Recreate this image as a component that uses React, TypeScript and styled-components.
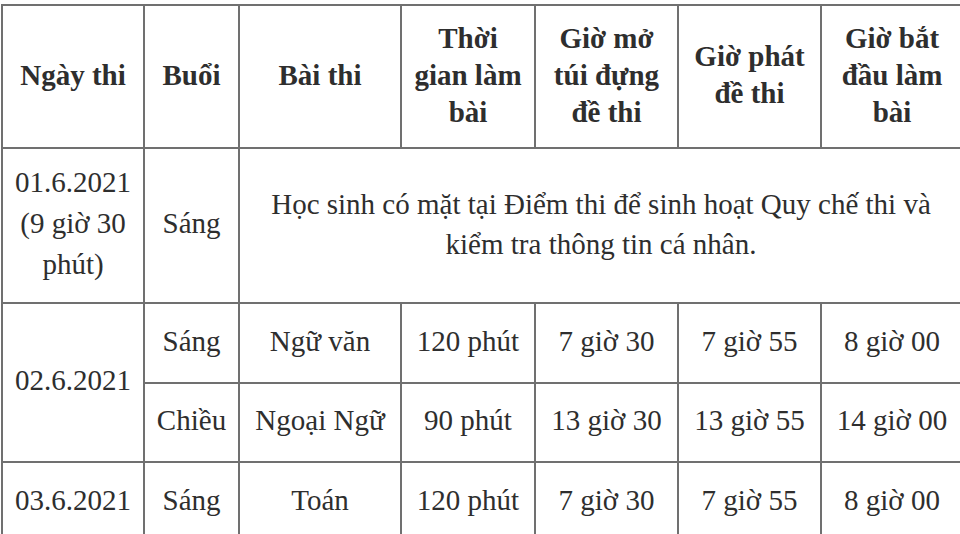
import React from 'react'
import styled, { createGlobalStyle } from 'styled-components'

const GlobalStyle = createGlobalStyle`
  html, body {
    margin: 0;
    padding: 0;
    background: #ffffff;
    overflow: hidden;
  }
  body {
    width: 960px;
    height: 534px;
  }
`

const Page = styled.div`
  padding: 4px 0 0 0;
  width: 960px;
  height: 534px;
  overflow: hidden;
  font-family: 'Liberation Serif', 'Times New Roman', serif;
  color: #2e2e2e;
`

const Table = styled.table`
  border-collapse: collapse;
  table-layout: fixed;
  width: 962px;
  margin-left: 1px;
`

const HeadCell = styled.th`
  border: 2px solid #707070;
  height: 138px;
  padding: 0 0 3px 0;
  font-size: 29px;
  font-weight: 700;
  line-height: 37px;
  text-align: center;
  vertical-align: middle;
  white-space: nowrap;
`

const Cell = styled.td<{ $h?: number; $lh?: number }>`
  border: 2px solid #707070;
  height: ${(p) => (p.$h ? p.$h : 74)}px;
  padding: 0 0 4px 0;
  font-size: 29px;
  font-weight: 400;
  line-height: ${(p) => (p.$lh ? p.$lh : 41)}px;
  text-align: center;
  vertical-align: middle;
  white-space: nowrap;
`

const cols = [142, 95, 162, 134, 143, 143, 142]

const headers = [
  ['Ngày thi'],
  ['Buổi'],
  ['Bài thi'],
  ['Thời', 'gian làm', 'bài'],
  ['Giờ mở', 'túi đựng', 'đề thi'],
  ['Giờ phát', 'đề thi'],
  ['Giờ bắt', 'đầu làm', 'bài'],
]

const Lines = ({ lines }: { lines: string[] }) => (
  <>
    {lines.map((l, i) => (
      <React.Fragment key={i}>
        {i > 0 && <br />}
        {l}
      </React.Fragment>
    ))}
  </>
)

export default function App() {
  return (
    <>
      <GlobalStyle />
      <Page>
        <Table>
          <colgroup>
            {cols.map((w, i) => (
              <col key={i} style={{ width: w }} />
            ))}
          </colgroup>
          <thead>
            <tr>
              {headers.map((h, i) => (
                <HeadCell key={i}>
                  <Lines lines={h} />
                </HeadCell>
              ))}
            </tr>
          </thead>
          <tbody>
            <tr>
              <Cell $h={149}>
                <Lines lines={['01.6.2021', '(9 giờ 30', 'phút)']} />
              </Cell>
              <Cell $h={149}>Sáng</Cell>
              <Cell $h={149} $lh={40} colSpan={5}>
                <Lines
                  lines={[
                    'Học sinh có mặt tại Điểm thi để sinh hoạt Quy chế thi và',
                    'kiểm tra thông tin cá nhân.',
                  ]}
                />
              </Cell>
            </tr>
            <tr>
              <Cell rowSpan={2}>02.6.2021</Cell>
              <Cell>Sáng</Cell>
              <Cell>Ngữ văn</Cell>
              <Cell>120 phút</Cell>
              <Cell>7 giờ 30</Cell>
              <Cell>7 giờ 55</Cell>
              <Cell>8 giờ 00</Cell>
            </tr>
            <tr>
              <Cell $h={73}>Chiều</Cell>
              <Cell $h={73}>Ngoại Ngữ</Cell>
              <Cell $h={73}>90 phút</Cell>
              <Cell $h={73}>13 giờ 30</Cell>
              <Cell $h={73}>13 giờ 55</Cell>
              <Cell $h={73}>14 giờ 00</Cell>
            </tr>
            <tr>
              <Cell>03.6.2021</Cell>
              <Cell>Sáng</Cell>
              <Cell>Toán</Cell>
              <Cell>120 phút</Cell>
              <Cell>7 giờ 30</Cell>
              <Cell>7 giờ 55</Cell>
              <Cell>8 giờ 00</Cell>
            </tr>
          </tbody>
        </Table>
      </Page>
    </>
  )
}
